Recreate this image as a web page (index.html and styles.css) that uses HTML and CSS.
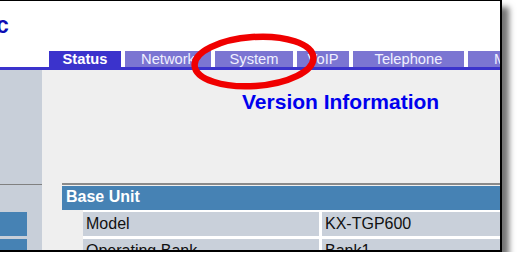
FILE: index.html
```html
<!DOCTYPE html>
<html lang="en">
<head>
  <meta charset="UTF-8" />
  <title>Version Information</title>
  <link rel="stylesheet" href="styles.css">
</head>
<body>

  <div class="shot">
    <div class="page">

      <div id="header">
        <span class="logo">c</span>
      </div>

      <div id="tabs">
        <div class="tab active tab-status">Status</div>
        <div class="tab tab-network">Network</div>
        <div class="tab tab-system">System</div>
        <div class="tab tab-voip">VoIP</div>
        <div class="tab tab-telephone">Telephone</div>
        <div class="tab tab-maint">Maintenance</div>
      </div>

      <div id="content">
        <div id="sidebar">
          <div class="side-rule"></div>
          <div class="side-item"></div>
          <div class="side-item"></div>
        </div>

        <main>
          <h1>Version Information</h1>

          <div class="info-table">
            <div class="section">Base Unit</div>
            <div class="rows">
              <div class="cell">Model</div>
              <div class="cell">KX-TGP600</div>
              <div class="cell">Operating Bank</div>
              <div class="cell">Bank1</div>
            </div>
          </div>
        </main>
      </div>
    </div>

    <!-- red highlight drawn over the tabs -->
    <svg class="mark" width="500" height="250" viewBox="0 0 500 250">
      <ellipse cx="254" cy="60.5" rx="59.5" ry="24.5" fill="none" stroke="#f00000" stroke-width="6.5" transform="rotate(-4 254 60.5)" />
    </svg>
  </div>

</body>
</html>
```

FILE: styles.css
```css
body {
  font-family: "Liberation Sans", Arial, sans-serif;
  margin: 0;
  background-color: #ffffff;
}

.shot {
  position: relative;
  width: 500px;
  height: 249px;
  border-top: 1px solid #000;
  border-right: 2px solid #000;
  border-bottom: 2px solid #000;
  box-shadow: 7px 7px 6px rgba(0, 0, 0, 0.55);
  overflow: hidden;
}

.page {
  width: 500px;
  height: 249px;
  background: #ffffff;
}

#header {
  height: 50px;
  box-sizing: border-box;
  padding-top: 12px;
}

.logo {
  display: inline-block;
  margin-left: -4px;
  font-size: 23px;
  line-height: 24px;
  font-weight: bold;
  color: #0c0cb4;
}

#tabs {
  display: flex;
  gap: 4px;
  padding-left: 49px;
  height: 16px;
  border-bottom: 3px solid #3b33cc;
  white-space: nowrap;
}

.tab {
  flex: none;
  height: 16px;
  font-size: 14.7px;
  line-height: 16px;
  text-align: center;
  color: #f0f0ff;
  background-color: #7b75d2;
}

.tab.active {
  background-color: #3b33cc;
  color: #ffffff;
  font-weight: bold;
}

.tab-status { width: 72px; }
.tab-network { width: 86px; }
.tab-system { width: 78px; }
.tab-voip { width: 52px; }
.tab-telephone { width: 111px; }
.tab-maint { width: 136px; }

#content {
  display: flex;
  height: 180px;
}

#sidebar {
  width: 42px;
  flex: none;
  background-color: #c8cfd9;
  padding-top: 114px;
  box-sizing: border-box;
}

.side-rule {
  height: 1px;
  background-color: #808080;
  margin-bottom: 27px;
}

.side-item {
  width: 27px;
  height: 24px;
  margin-bottom: 3px;
  background-color: #4682b4;
}

main {
  flex: 1;
  background-color: #efefef;
  padding-top: 20px;
}

h1 {
  margin: 0 0 69px 200px;
  font-size: 21px;
  line-height: 24px;
  color: #0000ee;
  white-space: nowrap;
}

.info-table {
  margin-left: 20px;
  border-top: 2px solid #8a8a8a;
  padding-top: 1px;
}

.section {
  height: 24px;
  box-sizing: border-box;
  padding: 1px 4px 0;
  font-size: 16px;
  line-height: 20px;
  font-weight: bold;
  color: #ffffff;
  background-color: #4682b4;
}

.rows {
  display: grid;
  grid-template-columns: 236px 1fr;
  gap: 3px;
  margin-left: 21px;
  padding-top: 2px;
  background-color: #ffffff;
}

.cell {
  height: 24px;
  padding-left: 3px;
  font-size: 16px;
  line-height: 24px;
  color: #111111;
  background-color: #c9d0da;
  white-space: nowrap;
}

.mark {
  position: absolute;
  left: 0;
  top: 0;
}
```
